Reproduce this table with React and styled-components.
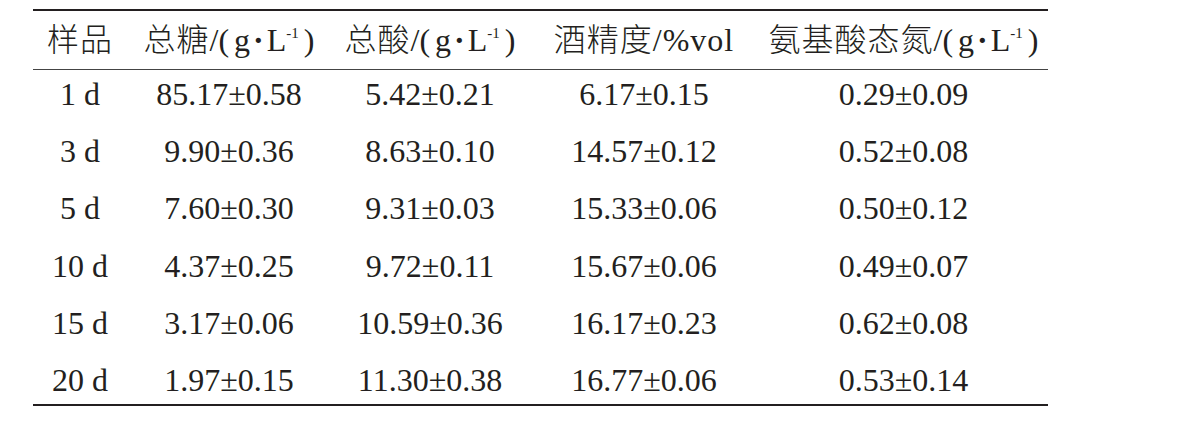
import React from "react";
import styled, { createGlobalStyle } from "styled-components";

const GlobalStyle = createGlobalStyle`
    body {
        margin: 0;
        background: #fff;
    }
`;

const header = [
    { name: "样品" },
    { name: "总糖", unit: true },
    { name: "总酸", unit: true },
    { name: "酒精度/%vol" },
    { name: "氨基酸态氮", unit: true },
];

const rows = [
    ["1 d", "85.17±0.58", "5.42±0.21", "6.17±0.15", "0.29±0.09"],
    ["3 d", "9.90±0.36", "8.63±0.10", "14.57±0.12", "0.52±0.08"],
    ["5 d", "7.60±0.30", "9.31±0.03", "15.33±0.06", "0.50±0.12"],
    ["10 d", "4.37±0.25", "9.72±0.11", "15.67±0.06", "0.49±0.07"],
    ["15 d", "3.17±0.06", "10.59±0.36", "16.17±0.23", "0.62±0.08"],
    ["20 d", "1.97±0.15", "11.30±0.38", "16.77±0.06", "0.53±0.14"],
];

const App = () => {
    return (
        <Page>
            <GlobalStyle />
            <Table>
                <Row head>
                    {header.map((h, i) => (
                        <Cell key={i}>
                            <Han>{h.name}</Han>
                            {h.unit && (
                                <>
                                    /(<Gap />g<Dot>·</Dot>L<Sup>-1</Sup><Gap />)
                                </>
                            )}
                        </Cell>
                    ))}
                </Row>
                <Body>
                    {rows.map((r, b) => (
                        <Row key={b}>
                            {r.map((v, i) => (
                                <Cell key={i}>{v}</Cell>
                            ))}
                        </Row>
                    ))}
                </Body>
            </Table>
        </Page>
    );
};

const Page = styled.div`
    padding: 9px 0 0 33px;
    width: 1183px;
    height: 430px;
    box-sizing: border-box;
    font-family: "Liberation Serif", "Noto Sans CJK SC", serif;
    color: #231f20;
`;
const Table = styled.div`
    width: 1015px;
    border-top: 2px solid #231f20;
    border-bottom: 2px solid #231f20;
`;
const Row = styled.div`
    display: grid;
    grid-template-columns: 94px 204px 198px 230px 289px;
    height: ${(p) => (p.head ? "58px" : "48px")};
    line-height: ${(p) => (p.head ? "58px" : "48px")};
    border-bottom: ${(p) => (p.head ? "1px solid #444" : "none")};
`;
const Body = styled.div`
    display: flex;
    flex-direction: column;
    gap: 9.2px;
`;
const Cell = styled.div`
    text-align: center;
    white-space: nowrap;
    font-size: 32px;
`;
const Han = styled.span`
    font-weight: 300;
    letter-spacing: 1px;
`;
const Gap = styled.span`
    display: inline-block;
    width: 5px;
`;
const Dot = styled.span`
    font-weight: bold;
    margin: 0 3px;
`;
const Sup = styled.span`
    font-size: 15px;
    vertical-align: 13px;
    line-height: 0;
`;

export default App;
